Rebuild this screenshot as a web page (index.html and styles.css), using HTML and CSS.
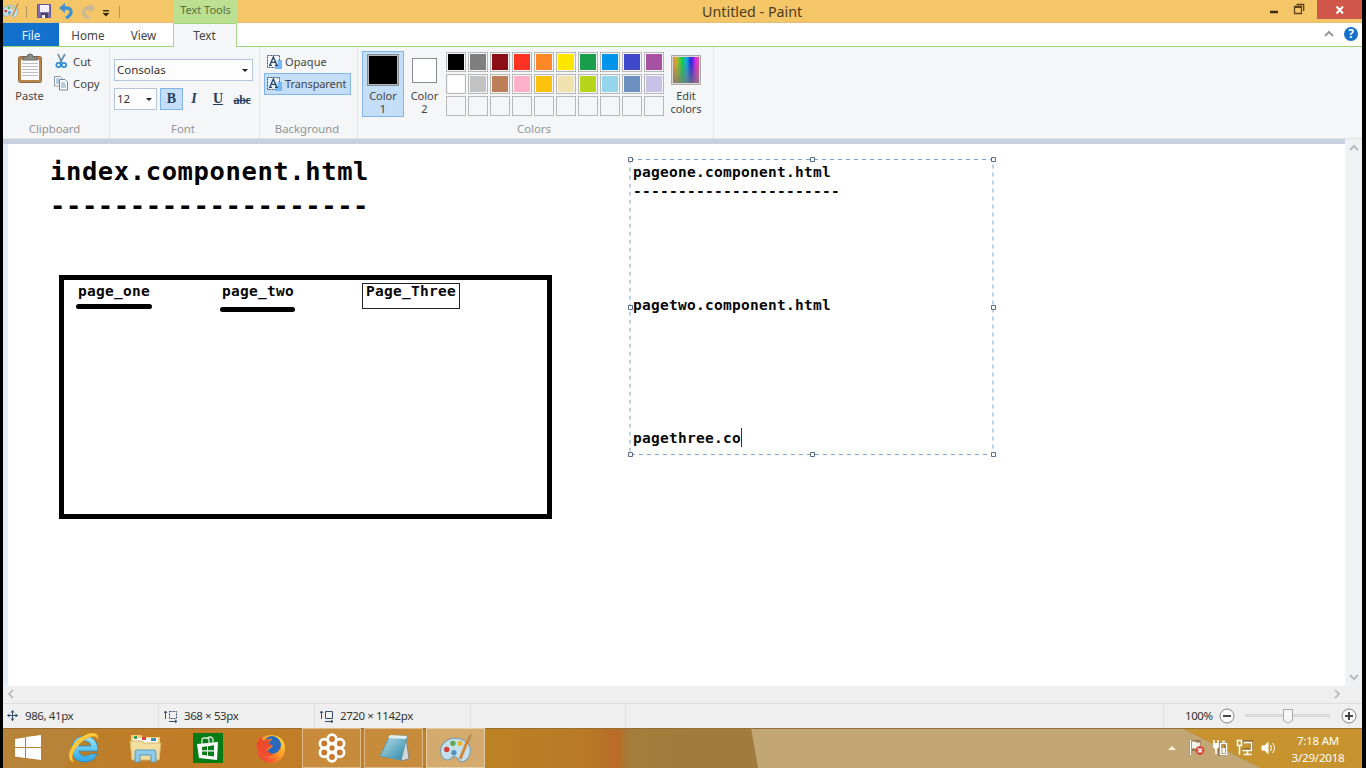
FILE: index.html
```html
<!DOCTYPE html>
<html lang="en">
<head>
<meta charset="utf-8">
<title>Untitled - Paint</title>
<link rel="stylesheet" href="styles.css">
</head>
<body>
<svg width="0" height="0" class="defs">
  <defs>
    <linearGradient id="rainbow"><stop offset="0" stop-color="#e98a49"/><stop offset=".15" stop-color="#b8b52d"/><stop offset=".35" stop-color="#16cc4c"/><stop offset=".52" stop-color="#18a6d8"/><stop offset=".7" stop-color="#2525e0"/><stop offset=".87" stop-color="#d92ae0"/><stop offset="1" stop-color="#ec4f8e"/></linearGradient>
    <linearGradient id="fade" x2="0" y2="1"><stop offset=".2" stop-color="#777" stop-opacity="0"/><stop offset="1" stop-color="#777" stop-opacity=".75"/></linearGradient>
    <linearGradient id="note" x2="1" y2="1"><stop offset="0" stop-color="#b8e2ea"/><stop offset="1" stop-color="#2f86a8"/></linearGradient>
    <linearGradient id="ie" x2="0" y2="1"><stop offset="0" stop-color="#9be6fb"/><stop offset="1" stop-color="#2fa6e4"/></linearGradient>
    <linearGradient id="fox" x1="1" x2="0" y2="1"><stop offset="0" stop-color="#ffe13c"/><stop offset=".5" stop-color="#ff9426"/><stop offset="1" stop-color="#e6243c"/></linearGradient>
    <symbol id="palette" viewBox="0 0 32 30">
      <path d="M15 5C7 5 1 11 1 18c0 5 4 9 8 8 3-1 3-4 6-3 3 0 3 5 7 5 5-1 8-6 8-11C30 10 24 5 15 5Z" fill="#c4dfea" stroke="#749cab"/>
      <circle cx="13" cy="10" r="2.6" fill="#5cae54"/><circle cx="7" cy="16" r="2.6" fill="#cf4136"/><circle cx="20" cy="10" r="2.5" fill="#e9b83b"/><circle cx="14" cy="19" r="2.6" fill="#5591bd"/>
      <path d="m20 25 7-17" stroke="#d38636" stroke-width="2.8"/><path d="m26 9 2-6 4-3-2 6-2 4Z" fill="#bd8d55"/>
    </symbol>
    <symbol id="textbg" viewBox="0 0 17 16"><path d="M9 6h7v9H9z" fill="#6eb5f5"/><path d="M1.500 1.500h12v12h-12z" fill="#f4f8fc" fill-opacity=".7" stroke="#405168" stroke-dasharray="2 1"/><path d="M12 6h4v9H9v-3h3z" fill="#76b8f6"/><path d="m4 11 3.300-8 3.500 8M5.200 8.300h4.300M3 11.300h3M9 11.300h3" fill="none" stroke="#294765" stroke-width="1.300"/></symbol>
  </defs>
</svg>
<div class="screen">
  <header class="titlebar">
    <div class="quick">
      <svg class="app-icon" width="17" height="17"><use href="#palette"/></svg><i class="tick"></i>
      <svg class="save" width="15" height="15" viewBox="0 0 15 15"><path d="M.5.5h13v13H.5z" fill="#7f6db0" stroke="#65558f"/><path d="M3 1h9v7H3z" fill="#f5f0fa"/><path d="M4 9h7v5H4z" fill="#4e4166"/><path d="M5 11h3v3H5z" fill="#eee"/></svg>
      <svg class="undo" width="15" height="17" viewBox="0 0 15 17"><path d="M3 5h4q6 0 5 5-1 3-5 5" fill="none" stroke="#3f91cf" stroke-width="3.300"/><path d="M0 5 6 0v10Z" fill="#3f91cf"/></svg>
      <svg class="redo" width="15" height="17" viewBox="0 0 15 17"><path d="M11 5H8Q1 5 3 11q1 3 5 4" fill="none" stroke="#c8b999" stroke-width="3.300"/><path d="m14 5-6-5v10Z" fill="#c8b999"/></svg>
      <svg class="drop" width="8" height="7"><path d="M1 .8h6" stroke="#34250d" stroke-width="1.400"/><path d="M.5 3h7L4 6.500Z" fill="#34250d"/></svg><i class="tick last"></i>
    </div>
    <div class="contextual">Text Tools</div>
    <h1>Untitled - Paint</h1>
    <div class="winbtns">
      <svg width="33" height="20"><path d="M8 12h8" stroke="#3e2c10" stroke-width="2.500"/></svg>
      <svg class="restore" width="20" height="20"><path d="M3.500 6.500h7v7h-7zM5.500 4.500h7.200V11" fill="none" stroke="#5f431b" stroke-width="1.300"/><path d="M3 7h8" stroke="#5f431b" stroke-width="2"/></svg>
      <div class="close"><svg width="10" height="10"><path d="m1.500 1.500 6.500 7m0-7-6.500 7" stroke="#fff" stroke-width="2"/></svg></div>
    </div>
  </header>
  <nav class="tabs"><b class="file">File</b><span class="home">Home</span><span class="view">View</span><span class="active">Text</span>
    <div class="help"><svg width="10" height="8"><path d="m1 6 4-4 4 4" fill="none" stroke="#999" stroke-width="2"/></svg><b>?</b></div>
  </nav>
  <main class="ribbon">
    <section class="group clipboard">
      <div class="content">
        <div class="paste"><svg width="26" height="32" viewBox="0 0 26 32"><rect x="1.500" y="3.500" width="23" height="26" rx="2" fill="#b98749" stroke="#8d6a42"/><path d="M4 7h18v20H4z" fill="#fafafa"/><path d="M5 10.500h16M5 13.500h16M5 16.500h16M5 19.500h16M5 22.500h16" stroke="#bac0c6"/><path d="M6 7V4h4q0-3 3-3t3 3h4v3Z" fill="#8f8f88" stroke="#666"/></svg><span>Paste</span></div>
        <div class="cutcopy"><div><svg width="16" height="16" viewBox="0 0 16 16"><path d="m5 1 4 9m3-9L7 10" stroke="#648eae" stroke-width="1.700"/><circle cx="5.500" cy="12" r="2.200" fill="none" stroke="#318dd0" stroke-width="1.700"/><circle cx="11" cy="12" r="2.200" fill="none" stroke="#318dd0" stroke-width="1.700"/></svg><span>Cut</span></div>
        <div><svg width="16" height="16" viewBox="0 0 16 16"><path d="M1.500 1.500H7L9.500 4v7h-8z" fill="#fff" stroke="#8b98a6"/><path d="M6.500 4.500H12L14.500 7v8h-8z" fill="#fff" stroke="#71869d"/><path d="M3 4h3M3 6h3M3 8h3M8 8h4M8 10h5M8 12h5" stroke="#6f9bc3"/></svg><span>Copy</span></div></div>
      </div><footer>Clipboard</footer>
    </section>
    <section class="group font">
      <div class="content"><div class="combo"><span>Consolas</span><i class="arrow"></i></div>
      <div class="format"><div class="combo size"><span>12</span><i class="arrow"></i></div><b class="bold">B</b><b class="italic">I</b><b class="underline">U</b><b class="strike">abc</b></div></div><footer>Font</footer>
    </section>
    <section class="group background"><div class="content"><div class="choice"><svg width="17" height="16"><use href="#textbg"/></svg><span>Opaque</span></div><div class="choice chosen"><svg width="17" height="16"><use href="#textbg"/></svg><span>Transparent</span></div></div><footer>Background</footer></section>
    <section class="group colors">
      <div class="content"><div class="color one"><i></i><span>Color<br>1</span></div><div class="color two"><i></i><span>Color<br>2</span></div>
      <div class="swatches">
        <i class="black"></i><i class="gray"></i><i class="maroon"></i><i class="red"></i><i class="orange"></i><i class="yellow"></i><i class="green"></i><i class="blue"></i><i class="indigo"></i><i class="purple"></i>
        <i class="white"></i><i class="silver"></i><i class="brown"></i><i class="pink"></i><i class="gold"></i><i class="cream"></i><i class="lime"></i><i class="sky"></i><i class="slate"></i><i class="lavender"></i>
        <i></i><i></i><i></i><i></i><i></i><i></i><i></i><i></i><i></i><i></i>
      </div>
      <div class="edit"><svg width="30" height="30"><path d="M.5.5h29v29H.5z" fill="#e1d8d5" stroke="#aaa"/><path d="M2 2h26v26H2z" fill="url(#rainbow)"/><path d="M2 2h26v26H2z" fill="url(#fade)"/></svg><span>Edit<br>colors</span></div></div>
      <footer>Colors</footer>
    </section>
  </main>
  <div class="workspace">
    <div class="canvas">
      <div class="drawtext title">index.component.html</div>
      <div class="drawtext title rule">--------------------</div>
      <div class="frame"></div>
      <div class="drawtext page1">page_one</div><i class="stroke s1"></i>
      <div class="drawtext page2">page_two</div><i class="stroke s2"></i>
      <div class="page3box"></div><div class="drawtext page3">Page_Three</div>
      <svg class="selection" width="370" height="302"><path d="M4 4.500h363v295H4z" fill="none" stroke="#73a4d4" stroke-dasharray="4 4"/><g fill="#fff" stroke="#596d86"><path d="M2.500 2.500h4v4h-4zM184.500 2.500h4v4h-4zM365.500 2.500h4v4h-4zM2.500 150.500h4v4h-4zM365.500 150.500h4v4h-4zM2.500 297.500h4v4h-4zM184.500 297.500h4v4h-4zM365.500 297.500h4v4h-4z"/></g></svg>
      <div class="drawtext p1">pageone.component.html</div><div class="drawtext dash">-----------------------</div><div class="drawtext p2">pagetwo.component.html</div><div class="drawtext p3">pagethree.co</div><i class="caret"></i>
    </div>
    <div class="vscroll"><svg width="10" height="8"><path d="m1 6 4-4 4 4" fill="none" stroke="#bbb" stroke-width="2"/></svg><svg width="10" height="8"><path d="m1 2 4 4 4-4" fill="none" stroke="#bbb" stroke-width="2"/></svg></div>
  </div>
  <div class="hscroll"><svg width="8" height="10"><path d="M6 1 2 5l4 4" fill="none" stroke="#b7b7b7" stroke-width="1.700"/></svg><svg width="8" height="10"><path d="m2 1 4 4-4 4" fill="none" stroke="#b7b7b7" stroke-width="1.700"/></svg></div>
  <div class="status">
    <div class="pos"><svg width="12" height="12"><path d="M5.500 1v10M1 5.500h10" stroke="#34506e"/><path d="M3.500 2.500h4L5.500 0Zm0 6h4L5.500 11ZM2.500 3.500v4L0 5.500Zm6 0v4L11 5.500Z" fill="#34506e"/></svg><span>986, 41px</span></div>
    <div class="selsize"><svg width="14" height="13"><path d="M1.500 9V1M0 3l1.500-2L3 3" stroke="#34506e" fill="none"/><path d="M5.500 1.500h7v7h-7z" fill="none" stroke="#34506e" stroke-dasharray="2 1"/><path d="M5 11.500h8m-2-1.500 2 1.500-2 1.500" stroke="#34506e" fill="none"/></svg><span>368 × 53px</span></div>
    <div class="imgsize"><svg width="14" height="13"><path d="M1.500 9V1M0 3l1.500-2L3 3M5.500 1.500h7v7h-7zM5 11.500h8m-2-1.500 2 1.500-2 1.500" stroke="#34506e" fill="none"/></svg><span>2720 × 1142px</span></div><div class="blank"></div>
    <div class="zoom"><span>100%</span><svg width="16" height="16"><circle cx="8" cy="8" r="7" fill="#fafafa" stroke="#858585"/><path d="M4 8h8" stroke="#444" stroke-width="2"/></svg><svg class="slider" width="86" height="18"><path d="M.5 7.500h84v2H.5z" fill="#e4e4e4" stroke="#d2d2d2"/><path d="M38.500 2.500h9v11L43 16l-4.500-2.500Z" fill="#f7f7f7" stroke="#aaa"/></svg><svg width="16" height="16"><circle cx="8" cy="8" r="7" fill="#fafafa" stroke="#858585"/><path d="M4 8h8M8 4v8" stroke="#444" stroke-width="2"/></svg></div>
  </div>
  <div class="taskbar">
    <svg class="wallpaper" width="1359" height="40" preserveAspectRatio="none"><defs><linearGradient id="amber"><stop offset="0" stop-color="#b97f2c"/><stop offset=".06" stop-color="#bb7f29"/><stop offset=".12" stop-color="#c27b26"/><stop offset=".27" stop-color="#bf7f26"/><stop offset=".36" stop-color="#bb8223"/><stop offset=".43" stop-color="#b87927"/><stop offset=".453" stop-color="#ba6b27"/><stop offset=".46" stop-color="#a27d3b"/><stop offset=".51" stop-color="#a17b3b"/></linearGradient></defs><path d="M0 0h1359v40H0z" fill="url(#amber)"/><path d="M0 0h78L61 40H0Z" fill="#b58640" opacity=".65"/><path d="m748 0 7 40h503L1179 0Z" fill="#c2a775"/><path d="m1179 0 79 40h101V0Z" fill="#c7932e"/><path d="M0 .5h1359" stroke="#976f35"/></svg>
    <div class="tasks">
      <span><svg width="28" height="26" viewBox="0 0 28 26"><path d="m1 4 10-1.500v9.500H1zm11-2L27 0v12H12zM1 13h10v10L1 21.500zm11 0h15v12l-15-2z" fill="#fff"/></svg></span>
      <span><svg width="34" height="32" viewBox="0 0 34 32"><path fill-rule="evenodd" d="M31 19H12q1 5 6 5 4 0 5-2h7q-3 8-12 8C9 30 5 25 5 17S10 4 18 4s13 6 13 15ZM12 14h12q-1-5-6-5t-6 5Z" fill="url(#ie)" stroke="#1f86c3" stroke-width=".7"/><path d="M7 30C-2 29 2 14 13 6 21 0 33-2 31 8c-1-5-7-4-12-1C9 13 2 24 7 30Z" fill="#ffcb3c" stroke="#d3962c" stroke-width=".5"/></svg></span>
      <span><svg width="34" height="32" viewBox="0 0 34 32"><path d="M2 3h10l2 2h17v22H2z" fill="#efd17a"/><path d="M4 6h25v5H4z" fill="#fff"/><path d="M5 4h3v3H5z" fill="#389d59"/><path d="M13 5h4v3h-4z" fill="#d14336"/><path d="M22 6h5v3h-5z" fill="#3d86c9"/><path d="m1 9 12 0 2 2h17l-2 17H3z" fill="#f2dfa0" stroke="#d5b565"/><path d="M6 30V20q0-2 2-2h17q2 0 2 2v10h-5v-7H11v7z" fill="#8fcae9" stroke="#559bc1"/></svg></span>
      <span><svg width="30" height="30"><path d="M0 0h30v30H0z" fill="#087c14"/><path d="m4 11 21-2-1 18-18-2z" fill="#fff"/><path d="M9 11V7q0-2 2-2h3q2 0 2 2v4M14 6q1-2 3-2t3 2v4" fill="none" stroke="#d8eadb" stroke-width="1.300"/><path d="m9 14 5-.7v4H9zm6-.8 6-.9v5h-6zM9 18.500h5v4l-5-.7zm6 0h6v5l-6-.8z" fill="#087c14"/></svg></span>
      <span><svg width="32" height="32" viewBox="0 0 32 32"><circle cx="16" cy="17" r="14" fill="url(#fox)"/><circle cx="17" cy="13" r="9" fill="#2868bd"/><path d="M3 8 5 4l4 5q3-3 8-2l-4 5 5 2-5 4c0 5 8 6 12 0 3-5 1-10-4-14 11 3 12 17 3 23C14 34-3 23 3 8Z" fill="url(#fox)"/><path d="m3 9 2-5 4 5q3-2 7-2l-3 5 5 1-6 4q1 5 7 5-9 5-16-4-3-4 0-9Z" fill="#ee4b2c"/></svg></span>
      <span class="open"><svg width="30" height="30" viewBox="0 0 30 30"><g fill="#c7792e" stroke="#fff" stroke-width="2.700"><circle cx="15" cy="6" r="4.300"/><circle cx="22.800" cy="10.500" r="4.300"/><circle cx="22.800" cy="19.500" r="4.300"/><circle cx="15" cy="24" r="4.300"/><circle cx="7.200" cy="19.500" r="4.300"/><circle cx="7.200" cy="10.500" r="4.300"/><circle cx="15" cy="15" r="4"/></g></svg></span>
      <span class="open"><svg width="34" height="32" viewBox="0 0 34 32"><path d="m29 5 3 22-8 2Z" fill="#cfd9d8" stroke="#8a8777"/><path d="M13 4h17l-6 24-21-4Z" fill="url(#note)" stroke="#5d9eae"/><path d="m13 3 17 1-1 3-18-1Z" fill="#e1eef0"/></svg></span>
      <span class="open current"><svg width="34" height="31"><use href="#palette"/></svg></span>
    </div>
    <div class="tray">
      <svg width="110" height="20" viewBox="0 0 110 20"><path d="m0 12 4-4 4 4Z" fill="#fff0dc"/><g fill="none" stroke="#60451e" stroke-opacity=".45" stroke-width="3"><path d="M22.500 2v15M24 3.500h7v8h-7M51.500 5.500h6v11h-6zM74.500 3.500h9v8h-9"/></g><path d="M22.500 2v15" stroke="#fff" stroke-width="1.500"/><path d="M24 3.500q3-1 4 1h4v7h-4q-1-2-4-1Z" fill="#fff" fill-opacity=".85"/><circle cx="32" cy="12.500" r="4.500" fill="#d94b40"/><path d="m30 10.500 4 4m0-4-4 4" stroke="#fff" stroke-width="1.300"/><path d="M46 2v4m4-4v4M48 10v6" stroke="#fff" stroke-width="1.500"/><path d="M45 5h6v4l-2 2h-2l-2-2Z" fill="#fff"/><path d="M52.500 5.500h6v11h-6zM54 3.500h3" fill="none" stroke="#fff" stroke-width="1.500"/><path d="M54.500 10h2.500v5h-2.500z" fill="#fff"/><path d="M69.500 2.500h4v5h-4zm2 5v9M75.500 4.500h8v8h-9M75.500 16.500h8m-4-4v4" fill="none" stroke="#fff" stroke-width="1.500"/><path d="M93.500 7.500h3l4-4v13l-4-4h-3z" fill="#fff"/><path d="M102.500 7q2 3 0 6m2-8q4 5 0 10" fill="none" stroke="#fff"/></svg>
      <div class="clock">7:18 AM<br>3/29/2018</div>
    </div>
  </div>
</div>
</body>
</html>
```
FILE: styles.css
```css
* { box-sizing: border-box; }
body { margin: 0; overflow: hidden; background: #000; font: 12px/14px "Noto Sans", sans-serif; color: #444; }
svg { display: block; flex-shrink: 0; }
.defs { position: absolute; }
.screen { width: 1366px; height: 768px; border-left: 3px solid #000; border-right: 4px solid #000; background: #fff; display: flex; flex-direction: column; overflow: hidden; }
.titlebar { height: 23px; flex-shrink: 0; background: #f4c667; display: flex; align-items: flex-start; border-bottom: 1px solid #e3bd72; }
.quick { width: 171px; height: 23px; display: flex; align-items: center; }
.app-icon { margin-top: -2px; margin-left: -1px; }
.tick { width: 1px; height: 12px; background: #ae9566; margin: 0 10px 0 7px; }
.save { margin-right: 7px; }
.undo { margin-right: 7px; }
.redo { margin-right: 6px; }
.drop { margin-top: 3px; }
.tick.last { margin: 0 0 0 9px; }
.contextual { width: 63px; height: 23px; background: #bddf92; text-align: center; line-height: 20px; color: #55713c; font-size: 11px; white-space: nowrap; }
h1 { flex: 1; margin: 0; padding-left: 465px; font-size: 14.3px; font-weight: 400; line-height: 23px; color: #4d3c20; }
.winbtns { display: flex; }
.restore { margin-right: 6px; margin-left: -4px; }
.close { width: 45px; height: 19px; background: #cf5649; display: flex; align-items: center; justify-content: center; }
.tabs { height: 24px; flex-shrink: 0; border-bottom: 1px solid #9bd477; display: flex; align-items: flex-start; line-height: 25px; font-size: 11.700px; }
.tabs > * { text-align: center; }
.file { width: 56px; height: 23px; background: #1171cd; color: #eff7ff; font-weight: 400; }
.home { width: 58px; }
.view { width: 53px; }
.active { width: 64px; height: 24px; margin-left: 3px; border: 1px solid #a6d883; border-bottom: 0; background: #f4f6f7; line-height: 23px; padding-right: 1px; }
.help { margin-left: auto; display: flex; align-items: center; gap: 10px; padding: 4px 4px 0 0; }
.help b { width: 14px; height: 14px; border-radius: 50%; background: #1671c9; color: #fff; font-size: 12px; line-height: 14px; }
.ribbon { height: 92px; flex-shrink: 0; display: flex; background: #f4f6f7; border-bottom: 1px solid #e0e4e9; font-size: 11.3px; }
.group { border-right: 1px solid #e3e5e8; display: flex; flex-direction: column; }
.content { height: 75px; }
.group footer { text-align: center; color: #939393; line-height: 14px; padding-right: 3px; }
.clipboard { width: 107px; }
.clipboard .content { display: flex; padding: 6px 0 0 13px; }
.paste { width: 27px; display: flex; flex-direction: column; align-items: center; gap: 4px; white-space: nowrap; }
.paste span { font-size: 11px; }
.cutcopy { padding-left: 10px; }
.cutcopy div { height: 22px; display: flex; align-items: flex-start; gap: 4px; line-height: 17px; }
.font { width: 150px; }
.font .content { padding: 12px 0 0 4px; }
.combo { width: 139px; height: 22px; border: 1px solid #b3c5dc; background: #fdfdfd; display: flex; align-items: center; justify-content: space-between; padding: 0 4px 0 2px; color: #333; font-size: 11.500px; }
.arrow { border: 3px solid transparent; border-top: 3px solid #222; border-bottom: 0; }
.format { display: flex; margin-top: 7px; align-items: center; color: #243e60; font-family: "Liberation Serif", serif; font-size: 14px; }
.size { width: 43px; font-family: "Noto Sans", sans-serif; }
.bold { width: 23px; height: 22px; margin-left: 3px; background: #c4def7; border: 1px solid #82b4e7; text-align: center; line-height: 20px; }
.italic { width: 22px; text-align: center; font-style: italic; }
.underline { width: 26px; text-align: center; text-decoration: underline; }
.strike { width: 22px; text-align: center; text-decoration: line-through; font-size: 12px; padding-top: 2px; letter-spacing: -.3px; }
.background { width: 98px; }
.background .content { padding: 4px 0 0 4px; }
.choice { width: 87px; height: 22px; border: 1px solid transparent; padding-left: 1px; display: flex; align-items: center; gap: 2px; white-space: nowrap; font-size: 11px; letter-spacing: -.1px; }
.choice:first-child { letter-spacing: .1px; }
.choice svg { margin-top: -1px; }
.chosen { background: #c4def7; border-color: #82b4e7; }
.colors { width: 356px; }
.colors .content { display: flex; padding: 4px 0 0 4px; }
.color { width: 42px; height: 66px; display: flex; flex-direction: column; align-items: center; text-align: center; line-height: 13px; font-size: 11px; }
.one { background: #c4def7; border: 1px solid #82b4e7; }
.color i { width: 32px; height: 32px; margin-top: 2px; border: 1px solid #888d94; box-shadow: inset 0 0 0 1px #b5b9bd; background: #000; }
.color span { margin-top: 3px; }
.color.two { width: 41px; }
.two i { width: 25px; height: 25px; margin-top: 7px; background: #fff; box-shadow: none; }
.two span { margin-top: 6px; }
.swatches { display: grid; grid-template-columns: repeat(10, 20px); grid-auto-rows: 20px; gap: 2px; margin: 1px 0 0 1px; height: 64px; }
.swatches i { border: 1px solid #b7b7b7; padding: 1px; background-clip: content-box; }
.black { background-color: #000; } .gray { background-color: #7f7f7f; } .maroon { background-color: #8b0e17; } .red { background-color: #fe3223; } .orange { background-color: #ff8726; } .yellow { background-color: #ffe600; } .green { background-color: #199e4b; } .blue { background-color: #0094eb; } .indigo { background-color: #3d49ca; } .purple { background-color: #a651a1; }
.white { background-color: #fff; } .silver { background-color: #c3c3c3; } .brown { background-color: #bd7d56; } .pink { background-color: #ffb1ca; } .gold { background-color: #ffc20c; } .cream { background-color: #efe2ae; } .lime { background-color: #b5d51b; } .sky { background-color: #94d5ec; } .slate { background-color: #6b8fbf; } .lavender { background-color: #c8c0e6; }
.edit { width: 32px; margin-left: 6px; padding-top: 4px; text-align: center; line-height: 13px; display: flex; flex-direction: column; align-items: center; gap: 4px; font-size: 11px; }
.workspace { flex: 1; display: flex; border-top: 5px solid #c8d0e0; position: relative; background: #fff; }
.canvas { width: 1342px; border-left: 5px solid #e5edf8; position: relative; }
.vscroll { flex: 1; background: #f0f1f2; margin-top: -5px; display: flex; flex-direction: column; align-items: center; justify-content: space-between; padding: 5px 0; }
.drawtext { position: absolute; white-space: pre; font: bold 14.500px/18px "DejaVu Sans Mono", monospace; letter-spacing: .27px; color: #080808; }
.title { left: 42px; top: 9px; font-size: 25.500px; line-height: 36px; letter-spacing: .6px; color: #000; }
.rule { top: 43px; }
.frame { position: absolute; left: 51px; top: 131px; width: 493px; height: 244px; border: 5px solid #000; }
.page1 { left: 70px; top: 138px; } .page2 { left: 214px; top: 138px; } .page3 { left: 358px; top: 138px; }
.stroke { position: absolute; height: 5px; border-radius: 3px; background: #000; }
.s1 { left: 68px; top: 160px; width: 76px; } .s2 { left: 212px; top: 163px; width: 75px; }
.page3box { position: absolute; left: 354px; top: 139px; width: 98px; height: 26px; border: 1px solid #222; }
.selection { position: absolute; left: 618px; top: 11px; }
.p1, .dash, .p2, .p3 { left: 625px; }
.p1 { top: 19px; } .dash { top: 38px; } .p2 { top: 152px; } .p3 { top: 285px; }
.caret { position: absolute; left: 733px; top: 284px; width: 1px; height: 19px; background: #333; }
.hscroll { height: 18px; flex-shrink: 0; background: #efefef; border-bottom: 1px solid #dedede; display: flex; justify-content: space-between; align-items: center; padding: 0 21px 2px 4px; }
.status { height: 24px; flex-shrink: 0; background: #efefef; display: flex; color: #333; font-size: 11.500px; letter-spacing: -.4px; white-space: nowrap; }
.status > div { display: flex; align-items: center; gap: 6px; border-right: 1px solid #dfdfdf; }
.pos { width: 156px; padding-left: 4px; } .selsize { width: 156px; padding-left: 5px; } .imgsize { width: 156px; padding-left: 5px; } .blank { width: 155px; }
.status .zoom { margin-left: auto; width: 199px; border-right: 0; border-left: 1px solid #dfdfdf; padding-left: 21px; padding-right: 4px; }
.status .slider { margin: 0 4px; }
.taskbar { height: 40px; flex-shrink: 0; display: flex; justify-content: space-between; position: relative; }
.wallpaper { position: absolute; inset: 0; }
.tasks { display: flex; position: relative; }
.tasks span { width: 62px; height: 40px; display: flex; align-items: center; justify-content: center; }
.tasks span:nth-child(1) { width: 50px; }
.tasks span:nth-child(5) { width: 63px; }
.tasks span:nth-child(-n+4) { padding-bottom: 1px; }
.tasks .open { width: 59px; margin-right: 3px; border: 1px solid #dfb887; background: #d7a56855; }
.tasks .current { border-color: #e6cda9; background: #dfbd91b0; }
.tray { position: relative; display: flex; align-items: center; color: #fff; }
.clock { margin: 1px 16px 0 12px; width: 56px; text-align: center; line-height: 17px; font-size: 11.500px; letter-spacing: -.2px; white-space: nowrap; }
```
